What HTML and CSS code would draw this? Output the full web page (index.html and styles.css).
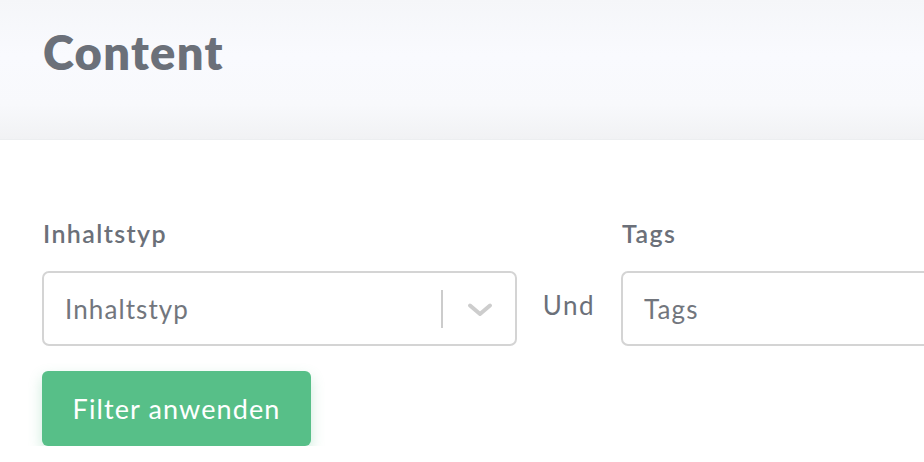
FILE: index.html
```html
<!DOCTYPE html>
<html lang="de">
<head>
  <meta charset="UTF-8">
  <meta name="viewport" content="width=device-width, initial-scale=1">
  <title>Content</title>
  <link rel="stylesheet" href="styles.css">
</head>
<body>
  <header class="page-head"><h1>Content</h1></header>
  <main class="filters">
    <div class="filter-row">
      <div class="field field-type">
        <label>Inhaltstyp</label>
        <div class="select">
          <span class="placeholder">Inhaltstyp</span>
          <span class="sep"></span>
          <svg class="chevron" width="26" height="26" viewBox="0 0 26 26"><path d="M3 9.5l10 8.5 10-8.5" fill="none" stroke="#cdcdcd" stroke-width="4" stroke-linecap="round" stroke-linejoin="round"/></svg>
        </div>
      </div>
      <span class="and">Und</span>
      <div class="field field-tags">
        <label>Tags</label>
        <div class="input"><span class="placeholder">Tags</span></div>
      </div>
    </div>
    <button class="btn">Filter anwenden</button>
  </main>
</body>
</html>
```

FILE: styles.css
```css
* { margin:0; padding:0; box-sizing:border-box; }
body { font-family:Lato,"Open Sans",sans-serif; background:#fff; color:#6b7079; overflow:hidden; }
.page-head { height:140px; padding:24px 43px 0;
  background:linear-gradient(#f5f6f9, #f9fafe 40%, #f8f9fc 75%, #f1f2f4);
  border-bottom:1px solid #eceef0; }
.page-head h1 { font-size:47px; font-weight:800; color:#6b7079; letter-spacing:1.3px; }
.filters { padding:78px 0 0 42px; }
.filter-row { display:flex; align-items:flex-end; }
.field, .and { flex-shrink:0; }
.field label { display:block; font-size:25px; font-weight:600; letter-spacing:1.4px; margin-bottom:23px; padding-left:1px; }
.field-type { width:475px; }
.select, .input { height:75px; border:2px solid #d4d4d4; border-radius:7px; display:flex; align-items:center; padding-left:21px; }
.placeholder { font-size:26px; letter-spacing:1.1px; color:#72767d; flex:1; }
.sep { width:2px; height:38px; background:#ccc; }
.chevron { margin:0 22px 0 24px; }
.and { font-size:26px; letter-spacing:1.5px; width:104px; text-align:center; padding-bottom:25px; color:#6b7079; }
.field-tags { width:330px; }
.input { border-right:none; border-radius:7px 0 0 7px; }
.btn { margin-top:25px; width:269px; height:75px; border:none; border-radius:6px; background:#57bf88; color:#fff;
  font-family:inherit; font-size:27px; letter-spacing:1.1px; box-shadow:0 6px 14px rgba(86,189,135,0.3); }
```
